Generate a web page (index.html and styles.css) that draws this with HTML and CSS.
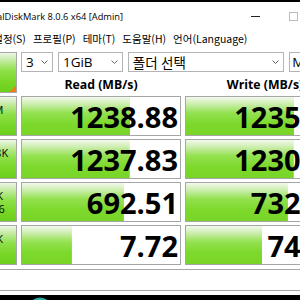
FILE: index.html
```html
<!DOCTYPE html>
<html lang="ko">
<head>
<meta charset="utf-8">
<title>CrystalDiskMark</title>
<link rel="stylesheet" href="styles.css">
</head>
<body>
<div class="window">
  <div class="titlebar">
    <span class="title">CrystalDiskMark 8.0.6 x64 [Admin]</span>
    <div class="caption">
      <span class="cap-btn"><svg width="9" height="9" viewBox="0 0 9 9"><line x1="0" y1="4.5" x2="9" y2="4.5" stroke="#222" stroke-width="1"/></svg></span>
      <span class="cap-btn"><svg width="9" height="9" viewBox="0 0 9 9"><rect x="0.5" y="0.5" width="8" height="8" fill="none" stroke="#bbb" stroke-width="1"/></svg></span>
      <span class="cap-btn"><svg width="9" height="9" viewBox="0 0 9 9"><path d="M0 0 L9 9 M9 0 L0 9" stroke="#222" stroke-width="1"/></svg></span>
    </div>
  </div>
  <div class="menubar">
    <span class="menu">파일(F)</span>
    <span class="menu">설정(S)</span>
    <span class="menu">프로필(P)</span>
    <span class="menu">테마(T)</span>
    <span class="menu">도움말(H)</span>
    <span class="menu">언어(Language)</span>
  </div>
  <div class="bench">
    <div class="all">All</div>
    <div class="selectors">
      <div class="combo combo-count"><span>3</span><svg class="chev" width="7" height="4" viewBox="0 0 7 4"><polyline points="0.5,0.5 3.5,3.5 6.5,0.5" fill="none" stroke="#666" stroke-width="1"/></svg></div>
      <div class="combo combo-size"><span>1GiB</span><svg class="chev" width="7" height="4" viewBox="0 0 7 4"><polyline points="0.5,0.5 3.5,3.5 6.5,0.5" fill="none" stroke="#666" stroke-width="1"/></svg></div>
      <div class="combo combo-drive"><span>폴더 선택</span><svg class="chev" width="7" height="4" viewBox="0 0 7 4"><polyline points="0.5,0.5 3.5,3.5 6.5,0.5" fill="none" stroke="#666" stroke-width="1"/></svg></div>
      <div class="combo combo-unit"><span>MB/s</span><svg class="chev" width="7" height="4" viewBox="0 0 7 4"><polyline points="0.5,0.5 3.5,3.5 6.5,0.5" fill="none" stroke="#666" stroke-width="1"/></svg></div>
    </div>
    <div class="head head-read">Read (MB/s)</div>
    <div class="head head-write">Write (MB/s)</div>

    <div class="label">SEQ1M<br>Q8T1</div>
    <div class="meter" style="--w:68.4%">1238.88</div>
    <div class="meter" style="--w:68.4%">1235.41</div>

    <div class="label">SEQ128K<br>Q32T1</div>
    <div class="meter" style="--w:68.2%">1237.83</div>
    <div class="meter" style="--w:68.2%">1230.16</div>

    <div class="label">RND4K<br>Q32T16</div>
    <div class="meter" style="--w:64.5%">692.51</div>
    <div class="meter" style="--w:64.5%">732.40</div>

    <div class="label">RND4K<br>Q1T1</div>
    <div class="meter" style="--w:31.6%">7.72</div>
    <div class="meter" style="--w:48.1%">74.05</div>
  </div>
  <div class="status"></div>
</div>
<div class="taskbar">
  <svg class="task-icon" width="26" height="26" viewBox="0 0 26 26"><circle cx="13" cy="13" r="12.5" fill="#2fa9a6"/><circle cx="13" cy="9" r="5" fill="#e8f6f5"/></svg>
</div>
</body>
</html>
```
FILE: styles.css
```css
html, body {
  margin: 0;
  padding: 0;
  width: 300px;
  height: 300px;
  overflow: hidden;
  background: #000;
}

.window {
  margin: 2px 0 0 -55px;
  width: 405px;
  background: #fff;
  font-family: "Open Sans", "Noto Sans CJK KR", sans-serif;
  color: #000;
}

.titlebar {
  display: flex;
  align-items: center;
  height: 28px;
  padding-left: 30px;
}

.title {
  font-size: 9.3px;
  white-space: nowrap;
}

.caption {
  display: flex;
  margin-left: auto;
  height: 28px;
}

.cap-btn {
  width: 38px;
  height: 28px;
  display: flex;
  align-items: center;
  justify-content: center;
}

.menubar {
  display: flex;
  align-items: center;
  height: 16px;
  padding-left: 8px;
  gap: 5px;
  font-family: "Noto Sans CJK KR", sans-serif;
  font-size: 10.5px;
  white-space: nowrap;
}

.menu {
  padding: 0 1px;
}

.bench {
  display: grid;
  grid-template-columns: 64px 160px 160px;
  grid-template-rows: 20px 18px repeat(4, 40px);
  column-gap: 4px;
  row-gap: 3px;
  padding: 6px 5px 0 8px;
}

.all {
  grid-column: 1;
  grid-row: 1 / span 2;
  border: 1px solid #a6a6a6;
  font-size: 13px;
  font-weight: bold;
  display: flex;
  align-items: center;
  justify-content: center;
  background:
    linear-gradient(to top left, #f07d1c 50%, transparent 50%) right bottom / 7px 7px no-repeat,
    linear-gradient(to bottom, #eef7e8 0%, #c6eba6 18%, #8ee048 45%, #78d626 75%, #6ccf1c 100%);
}

.selectors {
  grid-column: 2 / span 2;
  grid-row: 1;
  display: flex;
  gap: 5px;
}

.combo {
  box-sizing: border-box;
  height: 20px;
  border: 1px solid #b4b4b4;
  background: #fff;
  display: flex;
  align-items: center;
  justify-content: space-between;
  padding: 0 4px 0 4px;
  font-size: 13.5px;
  white-space: nowrap;
  overflow: hidden;
}

.combo-count { width: 32px; }
.combo-size { width: 65px; }
.combo-drive { width: 157px; }
.combo-unit { width: 56px; padding-left: 2px; }

.chev {
  flex: none;
}

.head {
  grid-row: 2;
  display: flex;
  align-items: center;
  justify-content: center;
  font-size: 12.3px;
  font-weight: bold;
}

.head-read { grid-column: 2; }
.head-write { grid-column: 3; }

.label {
  border: 1px solid #a6a6a6;
  background: linear-gradient(to bottom, #eef7e8 0%, #c6eba6 18%, #8ee048 45%, #78d626 75%, #6ccf1c 100%);
  display: flex;
  align-items: center;
  justify-content: center;
  text-align: center;
  font-size: 11px;
  line-height: 13px;
}

.meter {
  border: 1px solid #a6a6a6;
  background:
    linear-gradient(to bottom, #f2f9ec 0%, #cdeeb0 18%, #93e150 42%, #7dd92c 70%, #78d528 100%) left top / var(--w) 100% no-repeat,
    #fff;
  display: flex;
  align-items: center;
  justify-content: flex-end;
  padding-right: 2px;
  font-size: 29px;
  font-weight: bold;
  line-height: 1;
  white-space: nowrap;
}

.status {
  margin: 4px 5px 0 8px;
  height: 20px;
  border: 1px solid #a6a6a6;
  background: #fff;
}

.window::after {
  content: "";
  display: block;
  height: 4px;
}

.taskbar {
  height: 5px;
  overflow: hidden;
  background: #000;
}

.task-icon {
  display: block;
  margin: 2px 0 0 27px;
}
```
